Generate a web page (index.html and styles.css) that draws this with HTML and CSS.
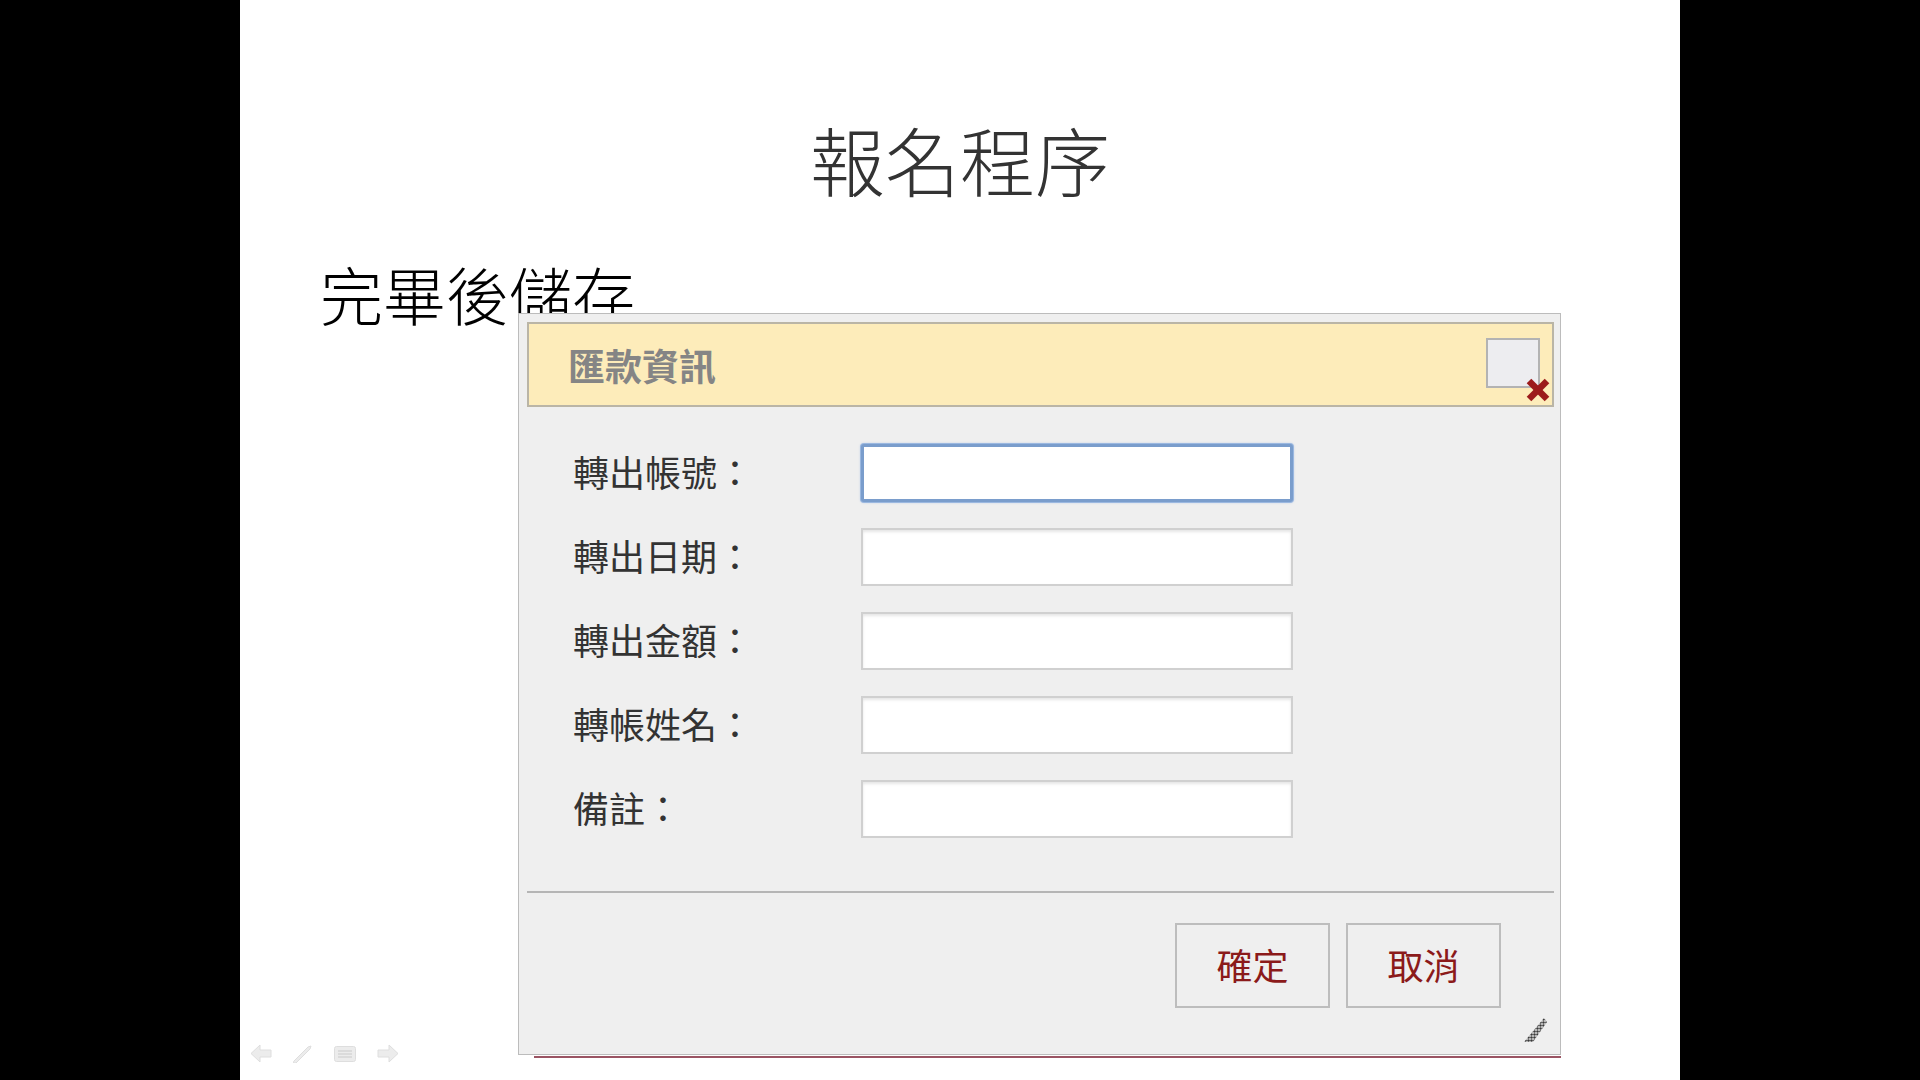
FILE: index.html
```html
<!DOCTYPE html>
<html lang="zh-Hant">

<head>
    <meta charset="UTF-8">
    <meta name="viewport" content="width=device-width, initial-scale=1.0">
    <title>報名程序</title>
    <link rel="stylesheet" href="styles.css">
</head>

<body>
    <div class="slide">
        <h1 class="slide-title">報名程序</h1>
        <p class="slide-text">完畢後儲存</p>

        <div class="slide-nav">
            <svg class="nav-icon" width="22" height="19" viewBox="0 0 22 19">
                <polygon points="1,9.5 10,1 10,6 21,6 21,13 10,13 10,18" />
            </svg>
            <svg class="nav-icon" width="20" height="19" viewBox="0 0 20 19">
                <polygon points="1,17 15,3 18,2 17,5 3,19 0,19" />
            </svg>
            <svg class="nav-icon" width="22" height="16" viewBox="0 0 22 16">
                <rect x="0.5" y="0.5" width="21" height="15" rx="2" />
                <line x1="4" y1="5" x2="18" y2="5" />
                <line x1="4" y1="8" x2="18" y2="8" />
                <line x1="4" y1="11" x2="18" y2="11" />
            </svg>
            <svg class="nav-icon" width="22" height="19" viewBox="0 0 22 19">
                <polygon points="21,9.5 12,1 12,6 1,6 1,13 12,13 12,18" />
            </svg>
        </div>

        <!-- 匯款資訊 popup -->
        <div class="dialog">
            <div class="dialog-header">
                <span class="dialog-title">匯款資訊</span>
                <span class="close-box">
                    <svg class="close-x" width="26" height="26" viewBox="0 0 26 26">
                        <line x1="4" y1="4" x2="22" y2="22" />
                        <line x1="22" y1="4" x2="4" y2="22" />
                    </svg>
                </span>
            </div>

            <form class="dialog-form">
                <div class="form-row">
                    <label for="acc">轉出帳號：</label>
                    <input type="text" id="acc" class="is-focused">
                </div>
                <div class="form-row">
                    <label for="date">轉出日期：</label>
                    <input type="text" id="date">
                </div>
                <div class="form-row">
                    <label for="amount">轉出金額：</label>
                    <input type="text" id="amount">
                </div>
                <div class="form-row">
                    <label for="name">轉帳姓名：</label>
                    <input type="text" id="name">
                </div>
                <div class="form-row">
                    <label for="memo">備註：</label>
                    <input type="text" id="memo">
                </div>
            </form>

            <div class="dialog-divider"></div>

            <div class="dialog-buttons">
                <button type="button">確定</button>
                <button type="button">取消</button>
            </div>

            <svg class="resize-grip" width="24" height="24" viewBox="0 0 24 24">
                <defs>
                    <pattern id="dots" width="3" height="3" patternUnits="userSpaceOnUse">
                        <circle cx="1.5" cy="1.5" r="1.3" fill="#3a3a3a" />
                    </pattern>
                </defs>
                <polygon points="20,0 23,4 9,24 0,24" fill="url(#dots)" />
            </svg>
        </div>
    </div>
</body>

</html>
```

FILE: styles.css
```css
body {
    margin: 0;
    background-color: #000;
    font-family: "Noto Sans CJK TC", "Noto Sans", sans-serif;
}

.slide {
    position: relative;
    width: 1440px;
    height: 1080px;
    margin: 0 auto;
    background-color: #fff;
    display: flex;
    flex-direction: column;
}

.slide-title {
    margin: 0;
    padding-top: 121px;
    font-size: 75px;
    line-height: 1;
    font-weight: 300;
    color: #333;
    text-align: center;
}

.slide-text {
    margin: 65px 0 0 0;
    padding-left: 80px;
    font-size: 63px;
    line-height: 1;
    font-weight: 300;
    color: #000;
}

.slide-nav {
    margin-top: auto;
    padding: 0 0 17px 10px;
    display: flex;
    align-items: center;
    gap: 21px;
}

.nav-icon {
    fill: #ececec;
    stroke: #dedede;
    stroke-width: 1;
}

.nav-icon line {
    stroke: #d6d6d6;
    stroke-width: 1.5;
}

/* dialog */
.dialog {
    position: absolute;
    left: 278px;
    top: 313px;
    width: 1043px;
    height: 742px;
    box-sizing: border-box;
    padding: 8px 6px 8px 8px;
    border: 1px solid #bcbcbc;
    background-color: #efefef;
}

.dialog::after {
    content: "";
    position: absolute;
    left: 15px;
    right: -1px;
    bottom: -4px;
    height: 2px;
    background-color: #9a5463;
}

.dialog-header {
    height: 85px;
    box-sizing: border-box;
    border: 2px solid #bab5a6;
    background-color: #fdecba;
    display: flex;
    align-items: center;
    justify-content: space-between;
    padding: 0 12px 0 39px;
}

.dialog-title {
    font-size: 37px;
    font-weight: 700;
    color: #858585;
}

.close-box {
    position: relative;
    width: 54px;
    height: 50px;
    box-sizing: border-box;
    border: 2px solid #b3b3b3;
    background-color: #ededf0;
    margin-bottom: 4px;
}

.close-x {
    position: absolute;
    left: 37px;
    top: 37px;
}

.close-x line {
    stroke: #9c1b1b;
    stroke-width: 6.5;
}

.dialog-form {
    margin-top: 37px;
    padding-left: 46px;
    display: flex;
    flex-direction: column;
    gap: 26px;
}

.form-row {
    display: flex;
    align-items: center;
}

.form-row label {
    width: 288px;
    font-size: 36px;
    line-height: 1;
    padding-bottom: 4px;
    color: #333;
}

.form-row input {
    width: 432px;
    height: 58px;
    box-sizing: border-box;
    border: 2px solid #d0d0d0;
    background-color: #fff;
    box-shadow: inset 0 2px 3px rgba(0, 0, 0, 0.1);
    font-size: 28px;
    outline: none;
}

.form-row input.is-focused {
    border: 3px solid #7a9dcc;
    border-radius: 3px;
    box-shadow: 0 0 0 1px #9bb8e0, 0 0 3px #9bb8e0;
}

.dialog-divider {
    margin-top: 53px;
    height: 2px;
    background-color: #b5b5b5;
}

.dialog-buttons {
    margin-top: 30px;
    padding-right: 53px;
    display: flex;
    justify-content: flex-end;
    gap: 16px;
}

.dialog-buttons button {
    width: 155px;
    height: 85px;
    border: 2px solid #bdbdbd;
    background-color: #efefef;
    color: #8b1a1a;
    font-family: "Noto Sans CJK TC", sans-serif;
    font-size: 36px;
    padding: 0 0 4px 0;
    cursor: pointer;
}

.resize-grip {
    position: absolute;
    right: 12px;
    bottom: 12px;
}
```
